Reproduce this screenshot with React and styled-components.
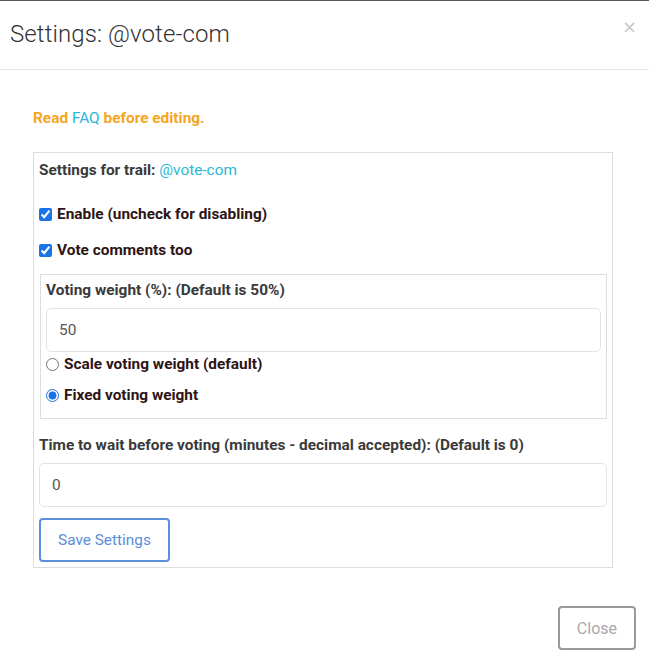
import React, { useState } from "react";
import styled, { createGlobalStyle } from "styled-components";

const Global = createGlobalStyle`
  html, body {
    margin: 0;
    padding: 0;
    background: #fff;
    font-family: Roboto, "Liberation Sans", Arial, sans-serif;
  }
  * { box-sizing: border-box; }
`;

const Modal = styled.div`
  width: 649px;
  height: 663px;
  background: #fff;
  border-top: 1px solid #555;
  display: flex;
  flex-direction: column;
`;

const Header = styled.div`
  position: relative;
  height: 69px;
  padding: 0 10px;
  display: flex;
  align-items: center;
  border-bottom: 1px solid #e5e5e5;
`;

const Title = styled.h4`
  margin: 0;
  font-size: 24px;
  font-weight: 300;
  color: #333;
  line-height: 28px;
  padding-bottom: 2px;
  letter-spacing: 0.1px;
`;

const CloseX = styled.button`
  position: absolute;
  top: 14px;
  right: 12px;
  border: none;
  background: none;
  padding: 0;
  font-family: "DejaVu Sans", sans-serif;
  font-size: 18px;
  line-height: 24px;
  color: #c8c8c8;
  cursor: pointer;
`;

const Body = styled.div`
  padding: 38px 36px 0 33px;
`;

const Notice = styled.p`
  margin: 0 0 24px;
  font-size: 15.4px;
  line-height: 20px;
  font-weight: 700;
  color: #f5a623;
`;

const Link = styled.a`
  color: #2bb8d6;
  font-weight: 400;
  text-decoration: none;
`;

const Box = styled.div`
  border: 1px solid ${({ $inner }) => ($inner ? "#dedede" : "#dddddd")};
  padding: ${({ $inner }) => ($inner ? "5px 5px 13px 5px" : "7px 5px 5px 5px")};
  margin-left: ${({ $inner }) => ($inner ? "1px" : "0")};
`;

const Label = styled.div`
  font-size: 15.4px;
  line-height: 20px;
  font-weight: 700;
  color: #3a3a3a;
  margin-top: ${({ $mt }) => $mt || 0}px;
`;

const Option = styled.label`
  display: flex;
  align-items: center;
  gap: 5px;
  font-size: 15.4px;
  line-height: 20px;
  font-weight: 700;
  color: #2e1515;
  margin-top: ${({ $mt }) => $mt || 0}px;
  input {
    margin: 0;
    width: 13px;
    height: 13px;
    accent-color: #1a73e8;
  }
`;

const Field = styled.input`
  display: block;
  width: 100%;
  height: 44px;
  margin-top: 8px;
  padding: 0 12px;
  border: 1px solid #e3e3e3;
  border-radius: 5px;
  font-family: inherit;
  font-size: 15.4px;
  color: #555;
  outline: none;
`;

const Button = styled.button`
  height: 44px;
  padding: 0 17px;
  border: 2px solid ${({ $variant }) => ($variant === "primary" ? "#5b8fd9" : "#9a9a9a")};
  border-radius: 4px;
  background: #fff;
  font-family: inherit;
  font-size: ${({ $variant }) => ($variant === "primary" ? "15.4px" : "16px")};
  color: ${({ $variant }) => ($variant === "primary" ? "#5a8ddb" : "#aaaaaa")};
  cursor: pointer;
`;

const SaveRow = styled.div`
  margin-top: 11px;
`;

const Spacer = styled.div`
  height: 14px;
`;

const Footer = styled.div`
  display: flex;
  justify-content: flex-end;
  padding: 38px 13px 0 0;
`;

export default function App() {
  const [enable, setEnable] = useState(true);
  const [comments, setComments] = useState(true);
  const [mode, setMode] = useState("fixed");
  const [weight, setWeight] = useState("50");
  const [wait, setWait] = useState("0");

  return (
    <>
      <Global />
      <Modal>
        <Header>
          <Title>Settings: @vote-com</Title>
          <CloseX aria-label="close">×</CloseX>
        </Header>
        <Body>
          <Notice>
            Read <Link href="#">FAQ</Link> before editing.
          </Notice>
          <Box>
            <Label>
              Settings for trail: <Link href="#">@vote-com</Link>
            </Label>
            <Option $mt={24}>
              <input type="checkbox" checked={enable} onChange={() => setEnable(!enable)} />
              Enable (uncheck for disabling)
            </Option>
            <Option $mt={16}>
              <input type="checkbox" checked={comments} onChange={() => setComments(!comments)} />
              Vote comments too
            </Option>
            <Spacer />
            <Box $inner>
              <Label>Voting weight (%): (Default is 50%)</Label>
              <Field value={weight} onChange={(e) => setWeight(e.target.value)} />
              <Option $mt={2}>
                <input type="radio" name="mode" checked={mode === "scale"} onChange={() => setMode("scale")} />
                Scale voting weight (default)
              </Option>
              <Option $mt={11}>
                <input type="radio" name="mode" checked={mode === "fixed"} onChange={() => setMode("fixed")} />
                Fixed voting weight
              </Option>
            </Box>
            <Label $mt={16}>Time to wait before voting (minutes - decimal accepted): (Default is 0)</Label>
            <Field value={wait} onChange={(e) => setWait(e.target.value)} />
            <SaveRow>
              <Button $variant="primary">Save Settings</Button>
            </SaveRow>
          </Box>
        </Body>
        <Footer>
          <Button>Close</Button>
        </Footer>
      </Modal>
    </>
  );
}
